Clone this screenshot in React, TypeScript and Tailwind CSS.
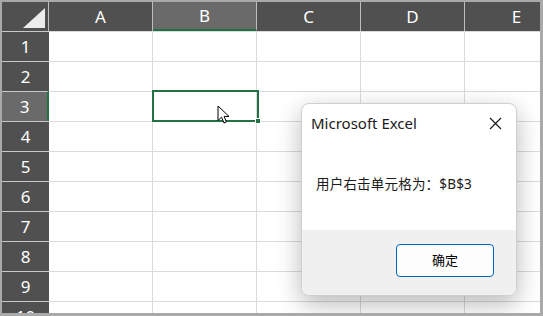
import React from 'react';

const cols = ['A', 'B', 'C', 'D', 'E'];
const rows = [1, 2, 3, 4, 5, 6, 7, 8, 9, 10];

function Cursor() {
  return (
    <svg width="14" height="20" viewBox="0 0 14 20" className="absolute left-[215px] top-[103px]">
      <path
        d="M1 1 L1 15.5 L4.6 12.2 L7 18 L9.4 17 L7.1 11.4 L12 11.4 Z"
        fill="#fff"
        stroke="#000"
        strokeWidth="1"
        strokeLinejoin="round"
      />
    </svg>
  );
}

function App() {
  return (
    <div className="w-[543px] h-[316px] bg-[#a9a9a9] pt-[2px] pl-[2px] pr-[3px] pb-[3px] font-['Noto_Sans','Noto_Sans_CJK_SC',sans-serif]">
      <div className="relative w-[538px] h-[311px] overflow-hidden bg-white">
        {/* column headers */}
        <div className="flex h-[29px] bg-[#505050]">
          <div className="relative w-[47px] shrink-0 border-r border-[#bdbdbd]">
            <svg width="22" height="20" className="absolute right-[3px] bottom-[3px]">
              <polygon points="22,0 22,20 0,20" fill="#ececec" />
            </svg>
          </div>
          {cols.map((c) => (
            <div
              key={c}
              className={
                c === 'B'
                  ? 'w-[104px] shrink-0 flex items-center justify-center border-r border-[#bdbdbd] bg-[#6a6a6a] border-b-2 border-b-[#217346] text-white text-[17px]'
                  : 'w-[104px] shrink-0 flex items-center justify-center border-r border-[#bdbdbd] text-white text-[17px]'
              }
            >
              {c}
            </div>
          ))}
        </div>

        {/* rows */}
        {rows.map((r) => (
          <div key={r} className="flex h-[30px]">
            <div
              className={
                r === 3
                  ? 'w-[47px] shrink-0 flex items-center justify-center bg-[#6a6a6a] border-t border-[#c8c8c8] border-r-2 border-r-[#217346] text-white text-[17px]'
                  : 'w-[47px] shrink-0 flex items-center justify-center bg-[#505050] border-t border-[#c8c8c8] text-white text-[17px]'
              }
            >
              {r}
            </div>
            {cols.map((c) => (
              <div key={c} className="w-[104px] shrink-0 border-t border-r border-[#dadada]" />
            ))}
          </div>
        ))}

        {/* selected cell B3 */}
        <div className="absolute left-[150px] top-[88px] w-[107px] h-[32px] border-2 border-[#217346]" />
        <div className="absolute left-[253px] top-[116px] w-[6px] h-[6px] bg-[#217346] border border-white" />

        <Cursor />

        {/* message box */}
        <div className="absolute left-[299px] top-[101px] w-[216px] h-[193px] rounded-[8px] border border-[#cfcfcf] bg-white shadow-[0_8px_24px_rgba(0,0,0,0.28)] overflow-hidden flex flex-col">
          <div className="flex items-center justify-between h-[38px] pl-[9px] pr-[14px] pt-[1px]">
            <span className="text-[15px] text-[#1a1a1a]">Microsoft Excel</span>
            <svg width="13" height="13" viewBox="0 0 13 13">
              <path d="M1 1 L12 12 M12 1 L1 12" stroke="#1a1a1a" strokeWidth="1.2" />
            </svg>
          </div>
          <div className="flex-1 pl-[14px] pt-[32px] text-[13.5px] tracking-[0.2px] text-[#1a1a1a]">用户右击单元格为：$B$3</div>
          <div className="h-[65px] bg-[#f0f0f0] flex items-center justify-end pr-[22px] pb-[4px]">
            <button className="w-[98px] h-[33px] rounded-[4px] border border-[#0067c0] bg-[#fdfdfd] text-[13px] text-black">
              确定
            </button>
          </div>
        </div>
      </div>
    </div>
  );
}

export default App;
